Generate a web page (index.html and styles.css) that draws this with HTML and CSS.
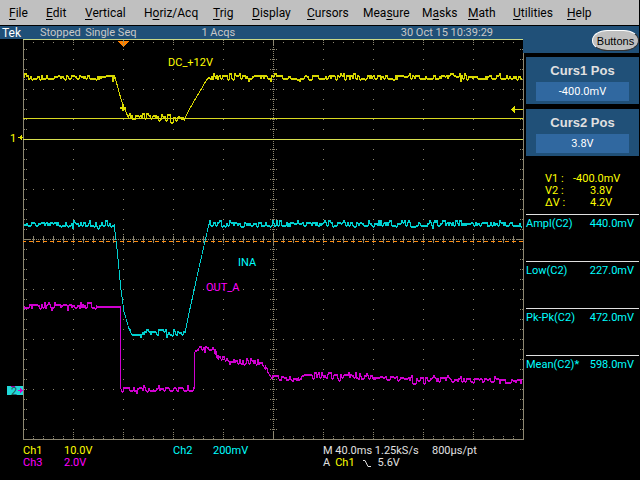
FILE: index.html
```html
<!DOCTYPE html>
<html lang="en">
<head>
<meta charset="utf-8">
<title>Tek</title>
<link rel="stylesheet" href="styles.css">
</head>
<body>
<div class="scope">
  <nav class="menu">
    <button class="m-file"><u>F</u>ile</button>
    <button class="m-edit"><u>E</u>dit</button>
    <button class="m-vert"><u>V</u>ertical</button>
    <button class="m-horiz">H<u>o</u>riz/Acq</button>
    <button class="m-trig"><u>T</u>rig</button>
    <button class="m-disp"><u>D</u>isplay</button>
    <button class="m-curs"><u>C</u>ursors</button>
    <button class="m-meas">Mea<u>s</u>ure</button>
    <button class="m-mask">M<u>a</u>sks</button>
    <button class="m-math"><u>M</u>ath</button>
    <button class="m-util"><u>U</u>tilities</button>
    <button class="m-help"><u>H</u>elp</button>
  </nav>
  <div class="body">
    <main class="main">
      <div class="status">
        <span class="brand">Tek</span>
        <span class="state">Stopped</span>
        <span class="seq">Single Seq</span>
        <span class="acqs">1 Acqs</span>
        <time>30 Oct 15 10:39:29</time>
      </div>
      <svg class="plot" id="plot" viewBox="0 39 526 402" shape-rendering="crispEdges" role="img" aria-label="Waveforms">
        <g id="grid"></g>
        <path d="M23 118.5H523" stroke="#d8d820"/>
        <path d="M23 139.5H523" stroke="#d8e050"/>
        <path d="M23 241.5H523" stroke="#ff8c10" stroke-dasharray="4 3" stroke-dashoffset="1"/>
        <g id="traces"></g>
        <path d="M117 40.500H130L123.500 47Z" fill="#ff8000"/>
        <path d="M123.500 41V46" stroke="#60a090" stroke-dasharray="1 1"/>
        <path d="M120 107H126V109H120Z M122 104H124V111H122Z" fill="#e0e000"/>
        <path d="M511 109.500L515 106V113Z" fill="#e0e000"/><path d="M514 109.500H523" stroke="#d8d820"/>
        <text x="10" y="142" class="ch1">1</text>
        <path d="M18 137.500H23M20.500 136V139M21.500 135V140" stroke="#e0e000"/>
        <path d="M7 386H23V395H7Z" fill="#20d8d8"/>
        <text x="11" y="395" class="zero">2</text>
        <path d="M18 390.500H23M20.500 388V393M21.500 389V392" stroke="#d000d0"/>
        <path d="M11 386.500H15" stroke="#a000a0"/>
        <text x="168" y="66" class="ch1">DC_+12V</text>
        <text x="238" y="266" class="ch2">INA</text>
        <text x="206" y="291" class="ch3">OUT_A</text>
      </svg>
      <footer class="readouts">
        <span class="ch1">Ch1</span><span class="ch1">10.0V</span><span class="ch2">Ch2</span><span class="ch2">200mV</span>
        <span class="timebase">M 40.0ms 1.25kS/s</span><span>800µs/pt</span>
        <span class="ch3">Ch3</span><span class="ch3">2.0V</span>
        <span class="trigger"><span>A</span><span class="ch1">Ch1</span><svg class="slope" viewBox="0 0 8 9"><path d="M0 1.500H2L5 7.500H8" fill="none" stroke="#e0e0e0"/></svg><span>5.6V</span></span>
      </footer>
    </main>
    <aside class="side">
      <div class="sidehead"><button class="oval">Buttons</button></div>
      <section class="card"><label for="c1">Curs1 Pos</label><input id="c1" value="-400.0mV"></section>
      <section class="card"><label for="c2">Curs2 Pos</label><input id="c2" value="3.8V"></section>
      <table class="cursors">
        <tr><th>V1 :</th><td>-400.0mV</td></tr>
        <tr><th>V2 :</th><td class="short">3.8V</td></tr>
        <tr><th>ΔV :</th><td class="short">4.2V</td></tr>
      </table>
      <dl class="measures">
        <div><dt>Ampl(C2)</dt><dd>440.0mV</dd></div>
        <div><dt>Low(C2)</dt><dd>227.0mV</dd></div>
        <div><dt>Pk-Pk(C2)</dt><dd>472.0mV</dd></div>
        <div><dt>Mean(C2)*</dt><dd>598.0mV</dd></div>
      </dl>
    </aside>
  </div>
</div>
<script src="plot.js"></script>
</body>
</html>
```
FILE: styles.css
```css
* { box-sizing: border-box; }
body { margin: 0; background: #000; color: #e0e0e0; font: 11px/12px Roboto, "Liberation Sans", sans-serif; }
button, input { font: inherit; color: inherit; border: 0; padding: 0; background: none; }
.menu { display: flex; height: 25px; margin-right: 1px; padding-left: 9px; background: #c0c0c0; color: #000; font-size: 12px; }
.menu button { text-align: left; white-space: nowrap; flex: none; }
.menu u { text-underline-offset: 2px; }
.m-file { width: 37px; }
.m-edit { width: 39px; }
.m-vert { width: 59px; }
.m-horiz { width: 69px; }
.m-trig { width: 39px; }
.m-disp { width: 55px; }
.m-curs { width: 56px; }
.m-meas { width: 59px; }
.m-mask { width: 46px; }
.m-math { width: 45px; }
.m-util { width: 54px; }
.body { display: grid; grid-template-columns: 526fr 114fr; margin-top: 1px; }
.status { display: grid; grid-template-columns: 38fr 45fr 116fr 199fr 125fr; height: 13px; padding-left: 2px; background: #205078; color: #c8c8c8; line-height: 14px; white-space: nowrap; }
.brand { color: #fff; font-size: 12px; }
.plot { display: block; width: 100%; }
.plot .ch1 { fill: #ff0; }
.plot .ch2 { fill: #0ff; }
.plot .ch3 { fill: #f0f; }
.plot .zero { fill: #205050; }
.ch1 { color: #ff0; }
.ch2 { color: #0ff; }
.ch3 { color: #f0f; }
.readouts { display: grid; grid-template-columns: 41fr 109fr 40fr 110fr 109fr 94fr; padding: 4px 0 0 23px; white-space: nowrap; }
.readouts .trigger { grid-column: 5; display: flex; gap: 5px; }
.slope { width: 8px; height: 9px; margin: 2px 2px 0 3px; }
.side { padding-right: 1px; }
.sidehead { display: flex; justify-content: flex-end; height: 27px; background: #205078; padding-top: 4px; margin-left: -3px; }
.oval { width: 47px; height: 21px; border-radius: 16px / 11px; background: #c0c0c0; color: #000; border: 1px solid #fff; border-right-color: #333; border-bottom-color: #333; font: 11px/18px "Liberation Sans", sans-serif; }
.card { background: #205078; height: 47px; margin-top: 4px; padding: 7px 10px 0; text-align: center; }
.card + .card { margin-top: 5px; }
.card label { display: block; height: 18px; font: bold 13px/14px "Liberation Sans", sans-serif; }
.card input { display: block; width: 100%; height: 19px; text-align: center; background: #3068a0; color: #fff; }
.cursors { border-collapse: collapse; color: #ff0; margin: 17px 0 5px 19px; }
.cursors th, .cursors td { font-weight: normal; padding: 0; text-align: left; }
.cursors th { width: 28px; }
.cursors .short { padding-left: 17px; }
.measures { margin: 0; color: #0ff; }
.measures div { display: flex; justify-content: space-between; height: 47px; padding: 3px 5px 0 0; border-top: 1px solid #e0e0e0; }
.measures dd { margin: 0; }
```
FILE: plot.js
```
const NS = "http://www.w3.org/2000/svg";
function path(parent, d, color) {
  const p = document.createElementNS(NS, "path");
  p.setAttribute("d", d);
  p.setAttribute("stroke", color);
  p.setAttribute("fill", "none");
  document.getElementById(parent).appendChild(p);
}

let dots = "";
const dot = (x, y) => { dots += `M${x} ${y}.5h1`; };
for (let y = 89; y < 439; y += 50) for (let x = 33; x < 523; x += 10) dot(x, y);
for (let x = 73; x < 523; x += 50) for (let y = 49; y < 439; y += 10) dot(x, y);
for (let y = 49; y < 439; y += 10) {
  [24, 26, 520, 522, 270, 272, 274, 276].forEach(x => dot(x, y));
}
for (let x = 33; x < 523; x += 10) {
  [42, 436, 438].forEach(y => dot(x, y));
  dots += `M${x + 0.5} 236v7`;
}
for (let x = 73; x < 523; x += 50) [40, 44, 434, 432, 234, 244].forEach(y => dot(x, y));
for (let x = 24; x < 523; x += 2) dot(x, 239);
for (let y = 41; y < 439; y += 2) dot(273, y);
path("grid", dots, "#8c8670");
path("grid", "M23.5 40V439.5H523.5V40M23 239.5h7M517 239.5h6", "#8c8670");
path("grid", "M23 39.5H524", "#c8d888");

let seed = 7;
function rnd() { seed = (seed * 16807) % 2147483647; return seed / 2147483647; }

// Each column spans from its own level to the previous one, so noise stays connected.
function trace(points, color) {
  let d = "", level = 0;
  for (let i = 0; i < points.length - 1; i++) {
    const [x0, y0, quiet] = points[i], [x1, y1] = points[i + 1];
    for (let x = x0; x < x1; x++) {
      const a = y0 + (y1 - y0) * (x - x0) / (x1 - x0);
      const b = y0 + (y1 - y0) * (x + 1 - x0) / (x1 - x0);
      const last = level;
      const r = rnd();
      if (quiet) level = 0;
      else if (r < 0.04) level = -4;
      else if (r < 0.24) level = -2;
      else if (r < 0.42) level = -1;
      else if (r < 0.68) level = 1;
      else if (r < 0.76) level = 2;
      else if (r > 0.98) level = 4;
      const noise = quiet ? 0 : Math.min(level, last);
      const spread = quiet ? 0 : Math.abs(level - last);
      const top = Math.round(Math.min(a, b)) + noise;
      const h = Math.max(2, Math.round(Math.abs(b - a)) + spread + (quiet ? 0 : 1));
      d += `M${x + 0.5} ${top}v${h}`;
    }
  }
  path("traces", d, color);
}
trace([[24, 77], [115, 77, 1], [121, 99, 1], [128, 117], [185, 118, 1], [190, 108, 1], [207, 79, 1], [209, 77], [522, 77]], "#d8d800");
trace([[24, 224], [114, 224, 1], [117, 249, 1], [121, 290, 1], [124, 312, 1], [129, 329], [132, 333], [185, 333, 1], [190, 308, 1], [196, 281, 1], [206, 237, 1], [209, 224], [522, 224]], "#00d0d0");
trace([[24, 306], [97, 306, 1], [120, 306, 1], [121, 389], [194, 389, 1], [195, 352, 1], [196, 350], [201, 348], [213, 348], [219, 357], [235, 361], [262, 363], [272, 377], [298, 379], [303, 376], [350, 376], [380, 378], [522, 381]], "#d000d0");
```
